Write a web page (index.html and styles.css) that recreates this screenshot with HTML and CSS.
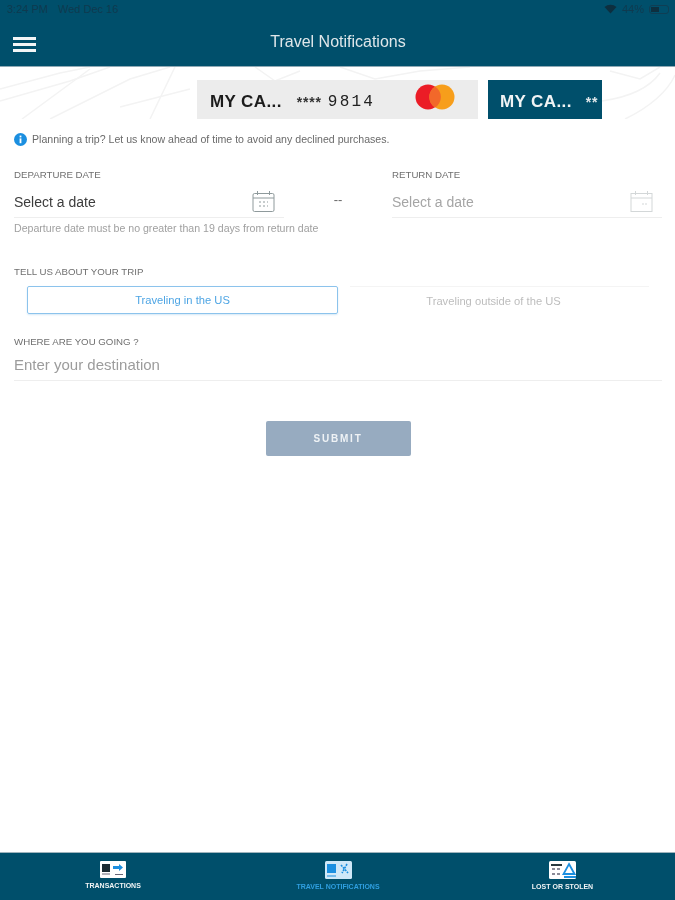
FILE: index.html
```html
<!DOCTYPE html>
<html lang="en">
<head>
    <meta charset="UTF-8">
    <meta name="viewport" content="width=device-width, initial-scale=1.0">
    <title>Travel Notifications</title>
    <link rel="stylesheet" href="styles.css">
</head>
<body>
    <header class="top-bar">
        <div class="status-bar">
            <span class="status-time">3:24 PM</span>
            <span class="status-date">Wed Dec 16</span>
            <span class="status-right">
                <svg width="13" height="10" viewBox="0 0 13 10"><path d="M6.5 9.5 0.5 3a9 9 0 0 1 12 0z" fill="#0d2f3f"/></svg>
                <span class="status-pct">44%</span>
                <span class="battery"><span class="battery-fill"></span></span>
            </span>
        </div>
        <div class="nav-bar">
            <button class="menu-btn" aria-label="Menu"><span></span><span></span><span></span></button>
            <h1>Travel Notifications</h1>
        </div>
    </header>

    <!-- card picker with the map lines behind it -->
    <section class="card-strip">
        <svg class="map-lines" width="675" height="52" viewBox="0 0 675 52" fill="none" stroke="#f3f3f3" stroke-width="1.5">
            <path d="M0 22 60 6 90 0"/>
            <path d="M0 34 70 14 110 0"/>
            <path d="M22 52 90 2"/>
            <path d="M50 52 130 12 170 0"/>
            <path d="M150 52 175 0"/>
            <path d="M120 40 190 22"/>
            <path d="M255 0 275 14 300 4"/>
            <path d="M340 0 375 12 420 4 470 0"/>
            <path d="M610 4 640 12 660 0"/>
            <path d="M625 52 C650 40 668 24 675 8"/>
            <path d="M602 34 C630 30 650 20 660 6"/>
        </svg>
        <div class="pay-card">
            <span class="card-name">MY CA...</span>
            <span class="card-stars">****</span>
            <span class="card-digits">9814</span>
            <svg class="mc-logo" width="40" height="26" viewBox="0 0 40 26">
                <circle cx="13" cy="13" r="12.5" fill="#eb1c26"/>
                <circle cx="27" cy="13" r="12.5" fill="#f79e1b"/>
                <path d="M20 2.4a12.5 12.5 0 0 1 0 21.2 12.5 12.5 0 0 1 0-21.2z" fill="#f2682a"/>
            </svg>
        </div>
        <div class="pay-card pay-card-dark">
            <span class="card-name">MY CA...</span>
            <span class="card-stars">**</span>
        </div>
    </section>

    <p class="info-line">
        <svg width="13" height="13" viewBox="0 0 13 13"><circle cx="6.5" cy="6.5" r="6.5" fill="#1b8fe0"/><rect x="5.6" y="5.4" width="1.8" height="4.8" fill="#fff"/><rect x="5.6" y="2.6" width="1.8" height="1.8" fill="#fff"/></svg>
        Planning a trip? Let us know ahead of time to avoid any declined purchases.
    </p>

    <form class="trip-form">
        <div class="date-row">
            <div class="date-col">
                <label class="field-label">DEPARTURE DATE</label>
                <div class="date-input">
                    <span class="date-value">Select a date</span>
                    <svg class="cal-icon" width="23" height="23" viewBox="0 0 23 23" fill="none" stroke="#8f9a9c"><rect x="1" y="3.5" width="21" height="18" rx="1.5"/><path d="M1 8h21M5.500 1v4M17.500 1v4"/><path d="M7 12h9M7 16h9" stroke-dasharray="2 2"/></svg>
                </div>
                <p class="hint">Departure date must be no greater than 19 days from return date</p>
            </div>
            <span class="date-sep">--</span>
            <div class="date-col">
                <label class="field-label">RETURN DATE</label>
                <div class="date-input">
                    <span class="date-value muted">Select a date</span>
                    <svg class="cal-icon" width="23" height="23" viewBox="0 0 23 23" fill="none" stroke="#d3d7d8"><rect x="1" y="3.500" width="21" height="18"/><path d="M1 8h21M5.500 1v4M17.500 1v4"/><path d="M12 14h5" stroke-dasharray="2 1"/></svg>
                </div>
            </div>
        </div>

        <label class="field-label trip-label">TELL US ABOUT YOUR TRIP</label>
        <div class="segments">
            <div class="segment active">Traveling in the US</div>
            <div class="segment">Traveling outside of the US</div>
        </div>

        <label class="field-label where-label">WHERE ARE YOU GOING ?</label>
        <div class="dest-input">Enter your destination</div>

        <button type="button" class="submit-btn">SUBMIT</button>
    </form>

    <nav class="tab-bar">
        <div class="tab">
            <svg width="26" height="17" viewBox="0 0 26 17"><rect width="26" height="17" rx="1" fill="#fff"/><rect x="2" y="3" width="8" height="8" fill="#1c2c33"/><path d="M13 5h6V3l4 3.500-4 3.500V8h-6z" fill="#1b8fe0"/><path d="M2 13h8M15 13.500h8" stroke="#667" stroke-width="1"/></svg>
            <span>TRANSACTIONS</span>
        </div>
        <div class="tab tab-active">
            <svg width="27" height="18" viewBox="0 0 27 18"><rect width="27" height="18" rx="1.500" fill="#cfe8f8"/><rect x="2" y="3" width="9" height="9" fill="#1b8fe0"/><path d="M16 4l7 8M22 3l-5 9" stroke="#1b8fe0" stroke-width="1.600" stroke-dasharray="2 1"/><path d="M2 15h9" stroke="#1b8fe0"/></svg>
            <span>TRAVEL NOTIFICATIONS</span>
        </div>
        <div class="tab">
            <svg width="27" height="18" viewBox="0 0 27 18"><rect width="27" height="18" rx="1.500" fill="#fff"/><path d="M2 3h11v2H2z" fill="#2a3a40"/><path d="M3 8h3M8 8h3M3 13h3M8 13h3" stroke="#667" stroke-width="1.500"/><path d="M20 3l5.500 10h-11z" fill="none" stroke="#1b8fe0" stroke-width="1.800"/><path d="M15 17h12v-2H15z" fill="#1b8fe0"/></svg>
            <span>LOST OR STOLEN</span>
        </div>
    </nav>
</body>
</html>
```

FILE: styles.css
```css
* {
    box-sizing: border-box;
}

html, body {
    height: 100%;
}

/* the source shot is soft, so everything gets a touch of blur */
body {
    margin: 0;
    height: 900px;
    display: flex;
    flex-direction: column;
    overflow: hidden;
    font-family: "Liberation Sans", Arial, sans-serif;
    background: #fff;
    color: #555;
    filter: blur(0.4px);
}

.top-bar {
    height: 67px;
    flex-shrink: 0;
    background: #004f6b;
    border-bottom: 1px solid #8fa9b5;
}

.status-bar {
    height: 18px;
    padding: 0 6px 0 7px;
    display: flex;
    align-items: center;
    font-size: 11px;
    color: #0f3a4f;
}

.status-date {
    margin-left: 10px;
}

.status-right {
    margin-left: auto;
    display: flex;
    align-items: center;
    gap: 5px;
}

.battery {
    width: 20px;
    height: 9px;
    border: 1px solid #0f3e54;
    border-radius: 3px;
    display: block;
    padding: 1px;
}

.battery-fill {
    display: block;
    width: 8px;
    height: 100%;
    background: #0d2f3f;
}

.nav-bar {
    height: 48px;
    position: relative;
    display: flex;
    align-items: center;
    justify-content: center;
}

.nav-bar h1 {
    margin: 0 0 0 1px;
    font-size: 16px;
    font-weight: normal;
    color: #dfe7ea;
}

.menu-btn {
    position: absolute;
    left: 13px;
    top: 19px;
    width: 23px;
    padding: 0;
    border: none;
    background: none;
    display: flex;
    flex-direction: column;
    gap: 3.500px;
}

.menu-btn span {
    display: block;
    height: 2.500px;
    background: #f2f5f6;
}

.card-strip {
    position: relative;
    height: 52px;
    flex-shrink: 0;
    padding: 13px 0 0 197px;
    display: flex;
    gap: 10px;
    overflow: hidden;
}

.map-lines {
    position: absolute;
    left: 0;
    top: 0;
}

.pay-card {
    position: relative;
    width: 281px;
    height: 39px;
    background: #ececec;
    display: flex;
    align-items: center;
    padding: 5px 0 0 13px;
    overflow: hidden;
}

.card-name {
    font-size: 17px;
    font-weight: bold;
    letter-spacing: 0.400px;
    color: #1c1c1c;
    white-space: nowrap;
}

.card-stars {
    margin-left: 15px;
    font-size: 14px;
    font-weight: bold;
    letter-spacing: 0.800px;
    color: #333;
}

.card-digits {
    margin-left: 6px;
    font-family: "Liberation Mono", monospace;
    font-size: 16px;
    color: #222;
    letter-spacing: 2.200px;
}

.mc-logo {
    position: absolute;
    left: 218px;
    top: 4px;
}

.pay-card-dark {
    width: 114px;
    background: #004f6b;
    padding-left: 12px;
}

.pay-card-dark .card-name {
    color: #f1f4f5;
}

.pay-card-dark .card-stars {
    margin-left: 14px;
    color: #dfe7ea;
}

.info-line {
    margin: 13px 0 0;
    padding-left: 14px;
    height: 14px;
    display: flex;
    align-items: center;
    gap: 5px;
    font-size: 10.600px;
    color: #6a6a6a;
}

.trip-form {
    flex: 1;
    padding: 0 13px 0 14px;
    display: flex;
    flex-direction: column;
}

.date-row {
    margin-top: 23px;
    display: flex;
    height: 97px;
}

.date-col {
    width: 270px;
}

.date-sep {
    width: 108px;
    text-align: center;
    padding-top: 23px;
    font-size: 13px;
    color: #666;
}

.field-label {
    display: block;
    font-size: 9.700px;
    line-height: 12px;
    color: #6f6f6f;
}

.date-input {
    height: 35px;
    margin-top: 2px;
    padding: 3px 9px 0 0;
    display: flex;
    align-items: center;
    justify-content: space-between;
    border-bottom: 1px solid #eeeeee;
}

.date-value {
    font-size: 14px;
    color: #3c3c3c;
}

.date-value.muted {
    color: #a5a5a5;
}

.hint {
    margin: 4px 0 0;
    font-size: 10.600px;
    color: #a0a0a0;
    white-space: nowrap;
}

.segments {
    margin-top: 8px;
    padding-left: 13px;
    display: flex;
    gap: 12px;
}

.segment {
    width: 299px;
    height: 28px;
    padding-right: 12px;
    display: flex;
    align-items: center;
    justify-content: center;
    font-size: 11.200px;
    color: #bdbdbd;
    border-top: 1px solid #f4f4f4;
}

.segment.active {
    width: 311px;
    padding-right: 0;
    color: #4ea5e4;
    border: 1.500px solid #8cc3ec;
    border-radius: 2px;
    box-shadow: 0 1px 2px #d5e8f6;
}

.where-label {
    margin-top: 22px;
}

.dest-input {
    height: 33px;
    padding-top: 1px;
    display: flex;
    align-items: center;
    font-size: 15px;
    color: #9c9c9c;
    border-bottom: 1px solid #eeeeee;
}

.submit-btn {
    width: 145px;
    height: 35px;
    margin: 40px auto 0;
    border: none;
    border-radius: 2px;
    background: #97abc0;
    color: #eef2f5;
    font-family: inherit;
    font-size: 10px;
    font-weight: bold;
    letter-spacing: 1.800px;
}

.tab-bar {
    height: 48px;
    flex-shrink: 0;
    background: #004f6b;
    border-top: 1px solid #9fb4bd;
    display: grid;
    grid-template-columns: 226px 224px 225px;
}

.tab {
    padding-top: 8px;
    display: flex;
    flex-direction: column;
    align-items: center;
    gap: 4px;
    font-size: 7px;
    font-weight: bold;
    color: #f0f4f5;
}

.tab-active {
    color: #2f9fe0;
}
```
